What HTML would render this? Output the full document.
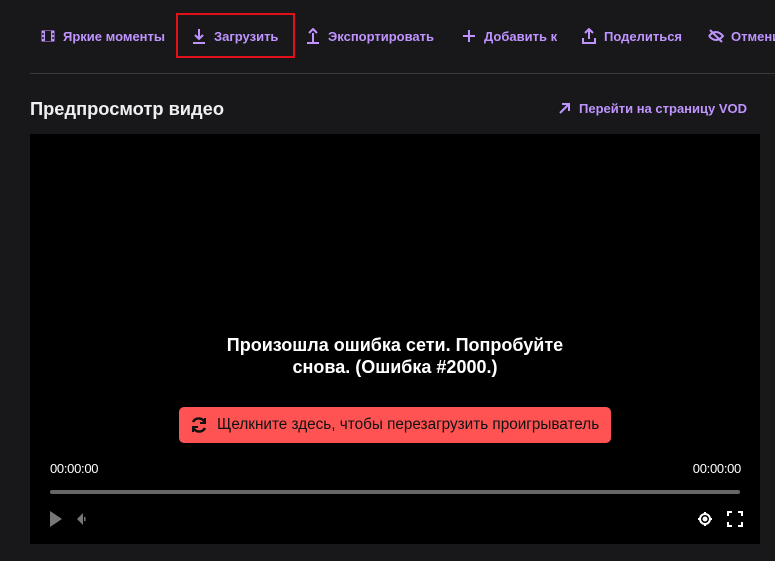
<!DOCTYPE html>
<html><head><meta charset="utf-8"><style>
*{margin:0;padding:0;box-sizing:border-box}
body{width:775px;height:561px;background:#18181b;font-family:"Liberation Sans",sans-serif;overflow:hidden;position:relative;color:#efeff1}
.nav{position:absolute;top:28px;font-size:13px;font-weight:bold;color:#bf94ff;white-space:nowrap;display:flex;align-items:center;gap:7px}
.nav svg{width:16px;height:16px;fill:none;stroke:#bf94ff;stroke-width:2}
.hl{position:absolute;left:176px;top:13px;width:119px;height:45px;border:2px solid #e3101a}
.line{position:absolute;left:30px;right:0;top:73px;height:1px;background:#3a3a3d}
h2{position:absolute;left:30px;top:98px;font-size:18.3px;font-weight:bold;color:#efeff1}
.vod{position:absolute;left:558px;top:101px;font-size:13px;font-weight:bold;color:#bf94ff;display:flex;gap:8px;align-items:center}
.video{position:absolute;left:30px;top:134px;width:730px;height:410px;background:#000}
.err{position:absolute;left:0;width:100%;top:200px;text-align:center;font-size:18px;font-weight:bold;line-height:22px;color:#fff}
.btn{position:absolute;left:149px;top:273px;width:432px;height:36px;background:#ff5252;border-radius:5px;color:#111;font-size:15.3px;display:flex;align-items:center;padding-left:10px;gap:8px;white-space:nowrap}
.t{position:absolute;top:327px;font-size:13px;color:#fff;letter-spacing:-0.3px}
.bar{position:absolute;left:20px;right:20px;top:356px;height:4px;background:#666;border-radius:2px}
</style></head><body>
<div class="nav" style="left:40px"><svg viewBox="0 0 16 16"><rect x="1.5" y="2.5" width="13" height="11" fill="#bf94ff" stroke="none"/><rect x="5" y="3" width="6" height="10" fill="#18181b" stroke="none"/><path d="M2 6h2M2 10h2M12 6h2M12 10h2" stroke="#18181b" stroke-width="1.5"/></svg>Яркие моменты</div>
<div class="hl"></div>
<div class="nav" style="left:191px"><svg viewBox="0 0 16 16"><path d="M8 1v10M4 7l4 4 4-4M2 15h12"/></svg>Загрузить</div>
<div class="nav" style="left:305px"><svg viewBox="0 0 16 16"><path d="M8 15V5M4 5l4-4 4 4M2 15h12"/></svg>Экспортировать</div>
<div class="nav" style="left:461px"><svg viewBox="0 0 16 16"><path d="M8 2v12M2 8h12"/></svg>Добавить к</div>
<div class="nav" style="left:581px"><svg viewBox="0 0 16 16"><path d="M8 11V1M4 5l4-4 4 4M2 10v5h12v-5"/></svg>Поделиться</div>
<div class="nav" style="left:708px"><svg viewBox="0 0 16 16"><path d="M1 8q7-8 14 0q-7 8-14 0M2 2l12 12"/></svg>Отменить</div>
<div class="line"></div>
<h2>Предпросмотр видео</h2>
<div class="vod"><svg width="13" height="13" viewBox="0 0 13 13" fill="none" stroke="#bf94ff" stroke-width="2"><path d="M2 11L11 2M4 2h7v7"/></svg>Перейти на страницу VOD</div>
<div class="video">
<div class="err">Произошла ошибка сети. Попробуйте<br>снова. (Ошибка #2000.)</div>
<div class="btn"><svg width="20" height="20" viewBox="0 0 20 20" fill="none" stroke="#111" stroke-width="2.5"><path d="M16 8A6.5 6.5 0 0 0 4 7M4 12a6.5 6.5 0 0 0 12 1"/><path d="M16 3v5h-5M4 17v-5h5" stroke-width="2"/></svg>Щелкните здесь, чтобы перезагрузить проигрыватель</div>
<div class="t" style="left:20px">00:00:00</div>
<div class="t" style="right:19px">00:00:00</div>
<div class="bar"></div>
<svg style="position:absolute;left:20px;top:377px" width="40" height="16"><path d="M0 0L12 8L0 16Z" fill="#777"/><path d="M27 8l6-6v12z" fill="#777"/><rect x="34" y="6" width="1.5" height="4" fill="#777"/></svg>
<svg style="position:absolute;left:667px;top:377px" width="46" height="16" fill="none" stroke="#fff" stroke-width="2"><circle cx="8" cy="8" r="5"/><circle cx="8" cy="8" r="1.5" fill="#fff"/><path d="M8 1v2M8 13v2M1 8h2M13 8h2"/><path d="M31 5V1h4M41 1h4v4M45 11v4h-4M35 15h-4v-4"/></svg>
</div>
</body></html>
